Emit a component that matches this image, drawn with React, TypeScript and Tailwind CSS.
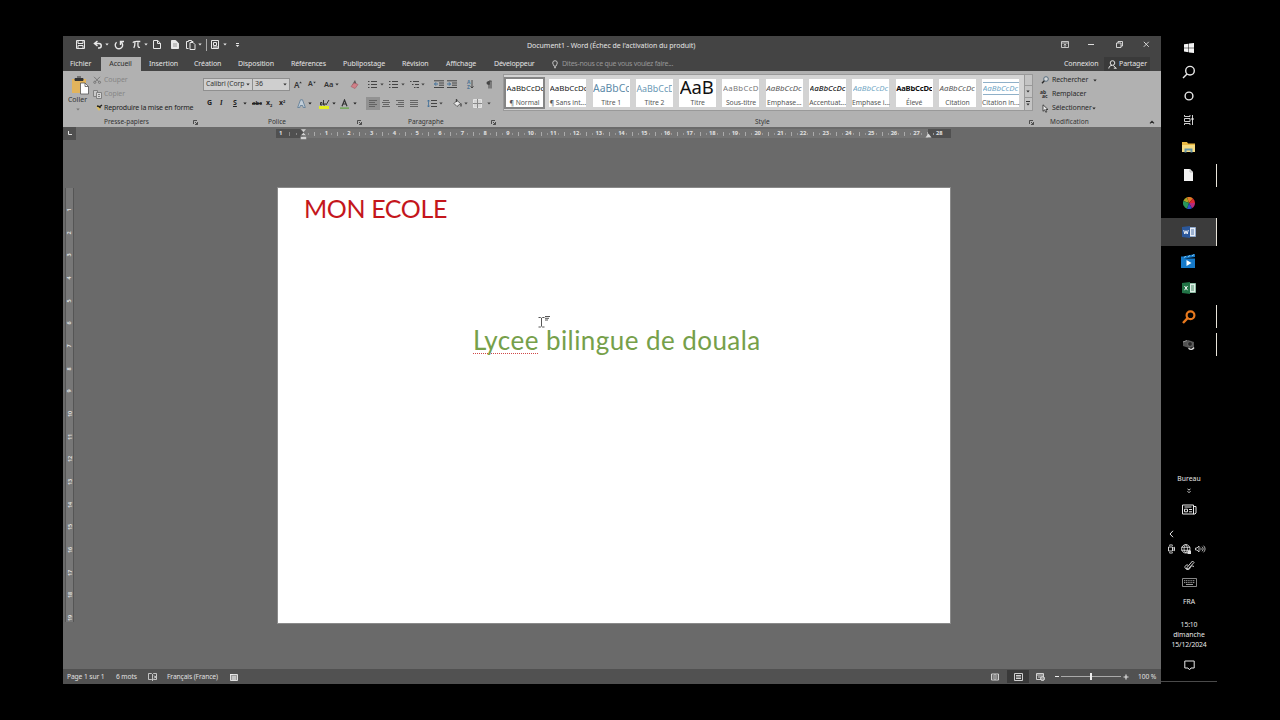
import type { ReactNode } from "react";
import clsx from "clsx";

type IconProps = { w?: number; h?: number; children: ReactNode; className?: string };

function Icon({ w = 10, h = 10, children, className }: IconProps) {
  return (
    <svg
      width={w}
      height={h}
      viewBox={`0 0 ${w} ${h}`}
      fill="none"
      stroke="currentColor"
      strokeWidth="1"
      className={clsx("shrink-0", className)}
    >
      {children}
    </svg>
  );
}

function Caret({ className }: { className?: string }) {
  return (
    <Icon w={4} h={3} className={className}>
      <path d="M0.3 0.5h3.4L2 2.5z" fill="currentColor" stroke="none" />
    </Icon>
  );
}

function Slot({ className, children }: { className: string; children?: ReactNode }) {
  return <div className={clsx("flex shrink-0 items-center whitespace-nowrap", className)}>{children}</div>;
}

function Launcher() {
  return (
    <Icon w={5} h={5} className="text-[#333]">
      <path d="M0.5 4V0.5H4M2 2l2.3 2.3M4.5 2v2.5H2" strokeWidth="0.8" />
    </Icon>
  );
}

function QuickAccess() {
  return (
    <div className="flex h-[17px] w-[200px] items-center text-[#e8e8e8]">
      <Slot className="w-[13px]" />
      <Slot className="w-[17px]">
        <Icon w={9} h={9}>
          <path d="M0.5 0.5h8v8h-8zM2 0.5v3h5v-3M2 8.5v-3h5v3" />
        </Icon>
      </Slot>
      <Slot className="w-[21px]">
        <Icon w={10} h={9}>
          <path d="M4.5 1L1.5 3.5l3 2.5M1.5 3.5h4.5a2.2 2.2 0 0 1 0 4.5H5" strokeWidth="1.5" />
        </Icon>
        <Caret className="ml-[2px]" />
      </Slot>
      <Slot className="w-[18px]">
        <Icon w={10} h={10}>
          <path d="M2.6 2.2A3.7 3.7 0 1 0 7 2M6.5 5V1.5H10" strokeWidth="1.4" />
        </Icon>
      </Slot>
      <Slot className="w-[21px]">
        <Icon w={9} h={9}>
          <path d="M0.8 2.6C1.6 1 2.6 1.5 8.3 1.5M3 1.7c0 3-.3 5-1.2 6.3M6 1.7c-.2 3.5-.4 6.2 2 5.7" strokeWidth="1.3" />
        </Icon>
        <Caret className="ml-[3px]" />
      </Slot>
      <Slot className="w-[18px]">
        <Icon w={8} h={9}>
          <path d="M0.5 0.5h4.2l2.8 2.8v5.2h-7zM4.5 0.5v3h3" />
        </Icon>
      </Slot>
      <Slot className="w-[15px]">
        <Icon w={8} h={9}>
          <path d="M0.5 0.5h4.2l2.8 2.8v5.2h-7z" fill="#e8e8e8" />
          <path d="M2 4h4M2 6h4" stroke="#777" strokeWidth="0.7" />
        </Icon>
      </Slot>
      <Slot className="w-[20px]">
        <Icon w={10} h={10}>
          <path d="M4 2.5h3l2 2v5H4zM2.5 8.5h-2v-7h2V.5h3v1H7v1" />
        </Icon>
        <Caret className="ml-[2px]" />
      </Slot>
      <Slot className="w-[5px]">
        <div className="h-[12px] w-px bg-[#aaa]" />
      </Slot>
      <Slot className="w-[24px]">
        <Icon w={9} h={9}>
          <path d="M0.5 0.5h7v8h-7zM2.5 2.5h3v3h-3zM2 7h5" />
        </Icon>
        <Caret className="ml-[3px]" />
      </Slot>
      <Slot className="w-[8px]">
        <Icon w={5} h={6}>
          <path d="M1 1.5h3" />
          <path d="M0.7 3h3.6L2.5 5z" fill="currentColor" stroke="none" />
        </Icon>
      </Slot>
    </div>
  );
}

function TitleBar() {
  return (
    <div className="flex h-[18px] text-[#e4e4e4]">
      <QuickAccess />
      <div className="flex h-[21px] w-[798px] items-center whitespace-nowrap pl-[264px] text-[7px] tracking-[-0.04px]">
        Document1 - Word (Échec de l'activation du produit)
      </div>
      <Slot className="h-[17px] w-[27px]">
        <Icon w={8} h={7}>
          <path d="M0.5 0.5h7v6h-7zM0.5 2h7M4 6V3.3M2.7 4.3L4 3.2l1.3 1.1" strokeWidth="0.8" />
        </Icon>
      </Slot>
      <Slot className="h-[17px] w-[28px]">
        <div className="h-px w-[6px] bg-[#ddd]" />
      </Slot>
      <Slot className="h-[17px] w-[27px]">
        <Icon w={7} h={7}>
          <path d="M0.5 2h4.5v4.5H0.5zM2 2V0.5h4.5V5H5" strokeWidth="0.9" />
        </Icon>
      </Slot>
      <Slot className="h-[17px]">
        <Icon w={7} h={7}>
          <path d="M0.8 0.8l5 5M5.8 0.8l-5 5" strokeWidth="0.9" />
        </Icon>
      </Slot>
    </div>
  );
}

function TabBar() {
  return (
    <div className="flex h-[17px] items-end text-[7px] tracking-[-0.08px] text-[#e4e4e4]">
      <Slot className="h-[14px] w-[38px] pl-[7px]">Fichier</Slot>
      <Slot className="h-[14px] w-[40px] justify-center bg-[#b1b1b1] pr-[1px] text-[#2c2c2c]">Accueil</Slot>
      <Slot className="h-[14px] w-[53px] pl-[8px]">Insertion</Slot>
      <Slot className="h-[14px] w-[44px]">Création</Slot>
      <Slot className="h-[14px] w-[53px]">Disposition</Slot>
      <Slot className="h-[14px] w-[52px] tracking-[-0.15px]">Références</Slot>
      <Slot className="h-[14px] w-[59px]">Publipostage</Slot>
      <Slot className="h-[14px] w-[44px]">Révision</Slot>
      <Slot className="h-[14px] w-[48px]">Affichage</Slot>
      <Slot className="h-[14px] w-[58px] tracking-[-0.15px]">Développeur</Slot>
      <Slot className="h-[14px] w-[10px]">
        <Icon w={6} h={9}>
          <path d="M2 6.2C2 5 .7 4.5.7 3a2.3 2.3 0 0 1 4.6 0C5.3 4.5 4 5 4 6.2zM2 7.7h2" strokeWidth="0.8" />
        </Icon>
      </Slot>
      <Slot className="h-[14px] w-[502px] tracking-[-0.27px] text-[#979797]">Dites-nous ce que vous voulez faire...</Slot>
      <Slot className="h-[14px] w-[40px]">Connexion</Slot>
      <Slot className="h-[14px] w-[46px] bg-[#3a3a3a] pl-[4px]">
        <Icon w={9} h={9} className="mr-[2px]">
          <circle cx="4.5" cy="3" r="2.3" />
          <path d="M0.8 8.5C1 6.3 2.4 5.4 4 5.4M5.2 5.3L8.3 8.5M5.8 8.2h2.5" />
        </Icon>
        Partager
      </Slot>
    </div>
  );
}

function GroupLabel({ children, className }: { children: ReactNode; className?: string }) {
  return <span className={clsx("whitespace-nowrap text-[6.5px] leading-[10px] text-[#333]", className)}>{children}</span>;
}

function ClipboardGroup() {
  return (
    <div className="flex w-[140px] shrink-0 flex-col">
      <div className="flex h-[45px]">
        <div className="flex w-[29px] flex-col items-center pt-[3px] text-[7px] leading-[9px] text-[#333]">
          <Icon w={18} h={20} className="ml-[4px]">
            <path d="M1 4h14v14H1z" fill="#e2b45c" stroke="none" />
            <path d="M4 3.5h8v2H4zM6 2h4" fill="#333" stroke="#333" />
            <path d="M9.5 8h4.5l3.5 3.5V19H9.5z" fill="#fff" stroke="#555" strokeWidth="0.8" />
            <path d="M14 8v3.5h3.5" stroke="#555" strokeWidth="0.8" />
          </Icon>
          <span>Coller</span>
          <Caret className="mt-[4px] text-[#777]" />
        </div>
        <div className="flex flex-col pt-[1px] text-[7px]">
          <Slot className="h-[14px] pl-[1px] tracking-[-0.1px] text-[#868686]">
            <Icon w={9} h={8} className="mr-[2px] text-[#777]">
              <path d="M1 .8l5 5M7 .8l-5 5" />
              <circle cx="1.8" cy="6.3" r="1.1" />
              <circle cx="6.5" cy="6.3" r="1.1" />
            </Icon>
            Couper
          </Slot>
          <Slot className="h-[14px] pl-[1px] tracking-[-0.1px] text-[#868686]">
            <Icon w={9} h={9} className="mr-[2px] text-[#808080]">
              <path d="M.5.5h4v6h-4z" fill="#c9c9c9" />
              <path d="M3.5 2.5h5v6h-5zM5 4.5h2M5 6.5h2" fill="#d6d6d6" />
            </Icon>
            Copier
          </Slot>
          <Slot className="h-[14px] pl-[4px] tracking-[-0.16px] text-[#222]">
            <Icon w={7} h={8} className="mr-[1px]">
              <path d="M0 2.5l3-1 2 2.5-2 3z" fill="#e0c060" stroke="none" />
              <path d="M1 2l2 .5L4.5 4M4 2.5l2-1.5" stroke="#222" strokeWidth="1.4" />
            </Icon>
            Reproduire la mise en forme
          </Slot>
        </div>
      </div>
      <div className="flex h-[10px] items-center">
        <GroupLabel className="w-[89px] pl-[41px]">Presse-papiers</GroupLabel>
        <Slot className="ml-[41px]">
          <Launcher />
        </Slot>
      </div>
    </div>
  );
}

function FontGroup() {
  return (
    <div className="flex w-[163px] shrink-0 flex-col">
      <div className="flex h-[45px] flex-col pt-[6px]">
        <div className="flex h-[13px] items-center text-[#333]">
          <Slot className="h-[13px] w-[50px] justify-between border border-[#8f8f8f] bg-[#cfcfcf] px-[2px] text-[6.8px] tracking-[-0.1px]">
            Calibri (Corp
            <Caret />
          </Slot>
          <Slot className="h-[13px] w-[37px] justify-between border border-l-0 border-[#8f8f8f] bg-[#cfcfcf] px-[2px] text-[7px]">
            36
            <Caret />
          </Slot>
          <Slot className="w-[14px] pl-[4px] text-[8px] font-semibold">
            A
            <Icon w={3} h={8}>
              <path d="M.2 2.3h2.6L1.5.5z" fill="#333" stroke="none" />
            </Icon>
          </Slot>
          <Slot className="w-[20px] pl-[4px] text-[7px] font-semibold">
            A
            <Icon w={3} h={8}>
              <path d="M.2.7h2.6L1.5 2.5z" fill="#333" stroke="none" />
            </Icon>
          </Slot>
          <Slot className="w-[26px] text-[7.5px] font-semibold">
            Aa
            <Caret className="ml-[2px]" />
          </Slot>
          <Slot className="w-[14px]">
            <Icon w={9} h={9}>
              <path d="M2 5l3-5 1.5 4z" fill="#555" stroke="none" />
              <path d="M1 6.5l3-3.5 4 1.5-3 4z" fill="#d08088" stroke="#a8606a" strokeWidth="0.7" />
            </Icon>
          </Slot>
        </div>
        <div className="mt-[6px] flex h-[13px] items-center text-[7px] font-bold text-[#222]">
          <Slot className="w-[17px] pl-[4px]">G</Slot>
          <Slot className="w-[13px] font-serif italic">I</Slot>
          <Slot className="w-[19px] gap-[6px]">
            <span className="underline">S</span>
            <Caret />
          </Slot>
          <Slot className="w-[14px] text-[6px] tracking-[-0.2px] line-through">abc</Slot>
          <Slot className="w-[13px]">
            x<span className="mt-[4px] text-[4px]">2</span>
          </Slot>
          <Slot className="w-[18px]">
            x<span className="mb-[4px] text-[4px]">2</span>
          </Slot>
          <Slot className="w-[22px]">
            <Icon w={9} h={9} className="mr-[2px]">
              <path d="M.7 8.5L3.5.8h2L8.3 8.5H6.2L5.7 6.5H3.3L2.8 8.5z" stroke="#5a7894" fill="#c3cfd9" strokeWidth="0.8" />
            </Icon>
            <Caret />
          </Slot>
          <Slot className="w-[21px]">
            <Icon w={11} h={10} className="mr-[2px]">
              <path d="M0 7h10v3H0z" fill="#e4ee20" stroke="none" />
              <path d="M1.5 3.5v2.5H3V3.5zM4.5 1v5H6V4M7 6l3-5" stroke="#333" />
            </Icon>
            <Caret />
          </Slot>
          <Slot className="w-[20px]">
            <Icon w={9} h={10} className="mr-[4px]">
              <path d="M0 8.3h9v1.7H0z" fill="#77a860" stroke="none" />
              <path d="M2 7.3L4.5 1 7 7.3M3 5h3" stroke="#333" strokeWidth="1.2" />
            </Icon>
            <Caret />
          </Slot>
        </div>
      </div>
      <div className="flex h-[10px] items-center">
        <GroupLabel className="w-[89px] pl-[65px]">Police</GroupLabel>
        <Slot className="ml-[65px]">
          <Launcher />
        </Slot>
      </div>
    </div>
  );
}

function Lines({ x = "M0 1.5h8M0 3.5h6M0 5.5h8M0 7.5h6" }: { x?: string }) {
  return (
    <Icon w={9} h={9} className="text-[#5c5c5c]">
      <path d={x} strokeWidth="0.9" />
    </Icon>
  );
}

function ParagraphGroup() {
  return (
    <div className="flex w-[136px] shrink-0 flex-col text-[#444]">
      <div className="flex h-[45px] flex-col pt-[6px]">
        <div className="flex h-[13px] items-center pl-[2px]">
          {[0, 1, 2].map((n) => (
            <Slot key={n} className={n === 2 ? "w-[24px] gap-[2px]" : "w-[21px] gap-[3px]"}>
              <Icon w={9} h={9}>
                {n === 2 ? (
                  <path d="M0 1.5h1.5M3 1.5h6M2 4.5h1.5M5 4.5h4M4 7.5h1.5M6.5 7.5H9" />
                ) : (
                  <path d="M0 1.5h1.5M3 1.5h6M0 4.5h1.5M3 4.5h6M0 7.5h1.5M3 7.5h6" />
                )}
              </Icon>
              <Caret />
            </Slot>
          ))}
          <Slot className="w-[13px]">
            <Icon w={10} h={9}>
              <path d="M0 .8h10M5 3h5M5 5.2h5M0 7.5h10" />
              <path d="M4 4H.5M2 2.3L.5 4 2 5.7" stroke="#3f6f99" />
            </Icon>
          </Slot>
          <Slot className="w-[20px]">
            <Icon w={10} h={9}>
              <path d="M0 .8h10M5 3h5M5 5.2h5M0 7.5h10" />
              <path d="M0 4h3.5M2 2.3L3.5 4 2 5.7" stroke="#3f6f99" />
            </Icon>
          </Slot>
          <Slot className="w-[19px]">
            <div className="flex flex-col text-[5px] font-bold leading-[5px] text-[#4f7596]">
              <span>A</span>
              <span>Z</span>
            </div>
            <Icon w={4} h={9} className="text-[#333]">
              <path d="M2 0v8M.5 6.3L2 8l1.5-1.7" strokeWidth="0.8" />
            </Icon>
          </Slot>
          <Slot>
            <Icon w={6} h={9}>
              <path d="M3 5V1h2.5M3 1v7.5M5 1v7.5" />
              <circle cx="2.2" cy="3" r="1.7" fill="#444" stroke="none" />
            </Icon>
          </Slot>
        </div>
        <div className="mt-[6px] flex h-[13px] items-center">
          <Slot className="h-[13px] w-[14px] justify-center bg-[#929292]">
            <Lines />
          </Slot>
          <Slot className="w-[14px] pl-[2px]">
            <Lines x="M1 1.5h6M0 3.5h8M1 5.5h6M0 7.5h8" />
          </Slot>
          <Slot className="w-[14px] pl-[2px]">
            <Lines x="M0 1.5h8M2 3.5h6M0 5.5h8M2 7.5h6" />
          </Slot>
          <Slot className="w-[19px] pl-[2px]">
            <Lines x="M0 1.5h8M0 3.5h8M0 5.5h8M0 7.5h8" />
          </Slot>
          <Slot className="w-[26px] gap-[2px]">
            <Icon w={10} h={9}>
              <path d="M4 1.5h6M4 4.5h6M4 7.5h6" />
              <path d="M1.5 1v7M.2 2.5L1.5 1l1.3 1.5M.2 6.5L1.5 8l1.3-1.5" stroke="#3f6f99" strokeWidth="0.8" />
            </Icon>
            <Caret />
          </Slot>
          <Slot className="w-[20px] gap-[1px]">
            <Icon w={10} h={9}>
              <path d="M1 4.5L4 1.5l3.5 3L4 7.5z" fill="#e8e8e8" strokeWidth="0.8" />
              <path d="M3.5 0v3M8 4.5v3" strokeWidth="1.3" />
            </Icon>
            <Caret />
          </Slot>
          <Slot className="gap-[5px]">
            <Icon w={9} h={9}>
              <path d="M.5.5h8v8h-8z" stroke="#e4e4e4" fill="#d5d5d5" />
              <path d="M4.5 0v9M0 4.5h9" stroke="#888" />
            </Icon>
            <Caret />
          </Slot>
        </div>
      </div>
      <div className="flex h-[10px] items-center">
        <GroupLabel className="w-[89px] pl-[42px]">Paragraphe</GroupLabel>
        <Slot className="ml-[36px]">
          <Launcher />
        </Slot>
      </div>
    </div>
  );
}

const styles = [
  { name: "¶ Normal", look: "text-[#222]" },
  { name: "¶ Sans int...", look: "text-[#222]" },
  { name: "Titre 1", sample: "AaBbCc", look: "text-[#5c8aa8] text-[10.4px]" },
  { name: "Titre 2", sample: "AaBbCcD", look: "text-[#6a99b5] text-[8.9px]" },
  { name: "Titre", sample: "AaB", look: "text-[#111] text-[18.5px] tracking-[-0.1px]" },
  { name: "Sous-titre", sample: "AaBbCcD", look: "text-[#777] text-[7.8px] tracking-[0.3px]" },
  { name: "Emphase...", look: "text-[#555] italic" },
  { name: "Accentuat...", look: "text-[#222] italic font-medium" },
  { name: "Emphase i...", look: "text-[#73a7c4] italic" },
  { name: "Élevé", look: "text-[#111] font-bold text-[7.6px] tracking-[-0.2px]" },
  { name: "Citation", look: "text-[#555] italic" },
  { name: "Citation in...", look: "text-[#6fa5c5] italic border-y border-[#8fb0c8]" },
];

function StyleGroup() {
  return (
    <div className="flex w-[538px] shrink-0 flex-col">
      <div className="flex h-[45px] items-start pl-[1px] pt-[2px]">
        <div className="flex h-[37px] items-center border border-[#999] bg-[#d3d3d3]">
          {styles.map((s, i) => (
            <div
              key={s.name}
              className={clsx(
                "mr-[2.3px] flex h-[32px] w-[41px] shrink-0 flex-col items-center overflow-hidden border bg-white",
                i === 0 ? "border-2 border-[#858585]" : "border-[#d3d3d3] p-[1px] bg-clip-content",
              )}
            >
              <div className="flex h-[18px] w-[37px] shrink-0 items-center justify-center overflow-hidden pt-[2px]">
                <span
                  className={clsx(
                    "w-[36px] overflow-hidden whitespace-nowrap",
                    s.name === "Titre" ? "mb-[4px] leading-[17px]" : "leading-[11px]",
                    /text-\[\d/.test(s.look) || "text-[7.9px]",
                    s.look,
                  )}
                >
                  {s.sample ?? "AaBbCcDc"}
                </span>
              </div>
              <div className="whitespace-nowrap pt-[1px] text-[6.8px] leading-[9px] tracking-[-0.05px] text-[#555]">
                {s.name}
              </div>
            </div>
          ))}
          <div className="flex h-[35px] w-[8px] flex-col border-l border-[#999] bg-[#c4c4c4] text-[#333]">
            <div className="h-[11px] border-b border-[#999]" />
            <div className="flex h-[12px] items-center justify-center border-b border-[#999]">
              <Caret />
            </div>
            <div className="flex h-[11px] flex-col items-center justify-center gap-px">
              <div className="h-px w-[4px] bg-[#333]" />
              <Caret />
            </div>
          </div>
        </div>
      </div>
      <div className="flex h-[10px] items-center">
        <GroupLabel className="w-[320px] pl-[253px]">Style</GroupLabel>
        <Slot className="ml-[207px]">
          <Launcher />
        </Slot>
      </div>
    </div>
  );
}

function EditGroup() {
  return (
    <div className="flex flex-1 flex-col text-[7px] tracking-[-0.1px] text-[#2a2a2a]">
      <div className="flex h-[45px] flex-col pt-[1px]">
        <Slot className="h-[14px] pl-[1px]">
          <Icon w={9} h={8} className="mr-[2px]">
            <circle cx="5" cy="3" r="2.3" stroke="#556d80" fill="#d8d8d8" />
            <path d="M3.3 4.8L1 7.2" strokeWidth="1.4" />
          </Icon>
          <span className="w-[41px]">Rechercher</span>
          <Caret />
        </Slot>
        <Slot className="h-[14px]">
          <div className="mr-[3px] flex w-[9px] flex-col text-[5px] font-bold leading-[4px]">
            <span>ab</span>
            <span className="pl-[2px]">ac</span>
          </div>
          Remplacer
        </Slot>
        <Slot className="h-[14px] pl-[2px]">
          <Icon w={8} h={9} className="mr-[2px]">
            <path d="M1 .8v6.5l1.6-1.5L3.8 8.3l1-.5-1-2.3H6z" fill="#f0f0f0" strokeWidth="0.8" />
          </Icon>
          Sélectionner
          <Caret />
        </Slot>
      </div>
      <div className="flex h-[10px] items-center">
        <GroupLabel className="w-[109px] pl-[10px] tracking-[0.05px]">Modification</GroupLabel>
        <Icon w={6} h={4}>
          <path d="M1 3.3l2-2 2 2" strokeWidth="1.2" />
        </Icon>
      </div>
    </div>
  );
}

function HorizontalRuler() {
  const numbers = Array.from({ length: 28 }, (_, i) => i + 1);
  return (
    <div className="flex h-[13px] shrink-0">
      <div className="flex size-[13px] items-center justify-center bg-[#505050]">
        <Icon w={5} h={5} className="text-[#e0e0e0]">
          <path d="M1.5 0v3.5H5" />
        </Icon>
      </div>
      <div className="ml-[200px] mt-[2px] flex h-[9px] w-[675px] text-[5.8px] font-bold leading-[9px] text-[#e0e0e0]">
        <div className="flex w-[27px] shrink-0 items-center justify-between bg-[#505050] pl-[3px] pr-[6px]">
          <span>1</span>
          <span className="h-[4px] w-px bg-[#888]" />
          <span className="h-[2px] w-px bg-[#888]" />
        </div>
        <div className="relative flex w-[648px] bg-[linear-gradient(90deg,#747474_625px,#505050_625px)]">
          {numbers.map((n) => (
            <div key={n} className="flex w-[22.71px] shrink-0 items-center">
              <span className="ml-[5px] h-[2px] w-px bg-[#999]" />
              <span className="ml-[5px] h-[4px] w-px bg-[#aaa]" />
              <span className="ml-[5px] h-[2px] w-px bg-[#999]" />
              <span className="-mr-[5px] ml-auto w-[9px] text-center tracking-[-0.2px]">{n}</span>
            </div>
          ))}
          <Icon w={7} h={11} className="absolute -left-[3px] top-0 text-[#d0d0d0]">
            <path
              d="M.5 0h6L3.5 3.5zM3.5 3.5L6.5 6.5h-6zM.5 7.5h6v3h-6z"
              fill="currentColor"
              stroke="#555"
              strokeWidth="0.4"
            />
          </Icon>
          <Icon w={7} h={5} className="absolute left-[622px] top-[4px] text-[#d8d8d8]">
            <path d="M3.5 .5L6.5 4.5h-6z" fill="currentColor" stroke="none" />
          </Icon>
        </div>
      </div>
    </div>
  );
}

function VerticalRuler() {
  const numbers = Array.from({ length: 19 }, (_, i) => i + 1);
  return (
    <div className="mb-[47px] ml-[2px] mt-[48px] w-[9px] shrink-0 border-x border-[#555] bg-[#777] pt-[3px] text-[5.5px] font-bold text-[#dedede]">
      {numbers.map((n) => (
        <div key={n} className="flex h-[22.67px] flex-col items-center">
          <span className="mt-[2px] h-px w-[2px] bg-[#888]" />
          <span className="mt-[5px] h-px w-[4px] bg-[#a0a0a0]" />
          <span className="mt-[5px] h-px w-[2px] bg-[#888]" />
          <span className="mt-[3px] -rotate-90 leading-[8px] tracking-[-0.2px]">{n}</span>
        </div>
      ))}
    </div>
  );
}

function Page() {
  return (
    <div className="ml-[203px] mt-[47px] h-[437px] w-[674px] shrink-0 border border-[#8a8a8a] bg-white font-[Lato,sans-serif]">
      <div className="pl-[26px] pt-[3px] text-[25px] leading-[34px] tracking-[-0.38px] text-[#c4161c]">MON ECOLE</div>
      <div className="relative mt-[99px] whitespace-nowrap pl-[195px] text-[26px] leading-[33px] tracking-[0.44px] text-[#76a04a]">
        <span className="underline decoration-[#d04848] decoration-dotted decoration-[1px] underline-offset-[3px] [text-decoration-skip-ink:none]">
          Lycee
        </span>{" "}
        bilingue de douala
        <Icon w={12} h={13} className="absolute left-[260px] top-[-8px] text-[#444]">
          <path d="M.5 1.5h2l1 .8 1-.8h2M3.5 2v8M.5 11h2l1-.8 1 .8h2" strokeWidth="0.9" />
          <path d="M7 .5h5M7 2.3h4M7 4h3" strokeWidth="0.9" />
        </Icon>
      </div>
    </div>
  );
}

function StatusBar() {
  return (
    <div className="flex h-[15px] items-center bg-[#515151] text-[6.7px] tracking-[-0.1px] text-[#e0e0e0]">
      <Slot className="w-[53px] pl-[4px] pt-[1px]">Page 1 sur 1</Slot>
      <Slot className="w-[32px] pt-[1px]">6 mots</Slot>
      <Slot className="w-[19px]">
        <Icon w={10} h={8}>
          <path d="M4.5 1.5v6M.5.5h3l1 1 1-1h3v6h-3l-1 1-1-1h-3zM6 2.5l2.5 3M8.5 2.5L6 5.5" strokeWidth="0.8" />
        </Icon>
      </Slot>
      <Slot className="w-[63px] pt-[1px]">Français (France)</Slot>
      <Slot className="w-[757px]">
        <Icon w={8} h={8}>
          <path d="M.5 1.5h7v6h-7z" fill="#999" />
          <path d="M0 1.5h3M2 4h4M2 6h4" stroke="#eee" />
        </Icon>
      </Slot>
      <Slot className="w-[20px] pl-[4px]">
        <Icon w={8} h={8}>
          <path d="M.5 1h7v6h-7zM4 1v6M1.5 3H3M1.5 5H3M5 3h1.5M5 5h1.5" strokeWidth="0.9" />
        </Icon>
      </Slot>
      <Slot className="h-[13px] w-[22px] justify-center bg-[#393939]">
        <Icon w={9} h={8}>
          <path d="M.5.5h8v7h-8zM2 2.5h5M2 4h5M2 5.5h5" strokeWidth="0.9" />
        </Icon>
      </Slot>
      <Slot className="w-[25px] pl-[7px]">
        <Icon w={9} h={8}>
          <path d="M.5.5h7v6h-7zM.5 2h7M2 4h3" strokeWidth="0.9" />
          <circle cx="6.5" cy="5.5" r="2" fill="#999" />
        </Icon>
      </Slot>
      <Slot className="w-[7px] pl-[1px]">
        <div className="h-px w-[4px] bg-[#eee]" />
      </Slot>
      <Slot className="w-[62px]">
        <div className="h-px w-[29px] bg-[#aaa]" />
        <div className="h-[7px] w-[2px] bg-[#eee]" />
        <div className="h-px w-[29px] bg-[#aaa]" />
      </Slot>
      <Slot className="w-[15px]">
        <Icon w={6} h={6}>
          <path d="M3 .5v5M.5 3h5" strokeWidth="1.2" />
        </Icon>
      </Slot>
      <Slot className="pt-[1px]">100 %</Slot>
    </div>
  );
}

type TaskItem = { h: string; icon: ReactNode; open?: boolean; active?: boolean };

const taskItems: TaskItem[] = [
  {
    h: "h-[23px]",
    icon: (
      <Icon w={10} h={10}>
        <path d="M0 1.3L4.5.7v4H0zM5 .6L10 0v4.7H5zM0 5.2h4.5v4L0 8.6zM5 5.2h5V10l-5-.6z" fill="#f4f4f4" stroke="none" />
      </Icon>
    ),
  },
  {
    h: "h-[25px]",
    icon: (
      <Icon w={14} h={14}>
        <circle cx="8" cy="5.7" r="4.3" strokeWidth="1.4" />
        <path d="M5 8.9L1 13" strokeWidth="1.4" />
      </Icon>
    ),
  },
  {
    h: "h-[24px]",
    icon: (
      <Icon w={10} h={10}>
        <circle cx="5" cy="5" r="3.9" strokeWidth="1.4" />
      </Icon>
    ),
  },
  {
    h: "h-[23px]",
    icon: (
      <Icon w={10} h={10}>
        <path d="M.5 0v1.5H6V0M.5 3.5H6v3H.5zM.5 10V8.5H6V10M8.5 0v10" strokeWidth="0.9" />
        <path d="M7.5 3h2v2h-2z" fill="currentColor" stroke="none" />
      </Icon>
    ),
  },
  {
    h: "h-[32px]",
    icon: (
      <Icon w={13} h={11}>
        <path d="M0 0h5l1 1.5h7V10H0z" fill="#e9b843" stroke="none" />
        <path d="M0 3h13v7H0z" fill="#f6dc83" stroke="none" />
        <path d="M2.5 10.5V6.5h8v4H8.5V8.5h-4v2z" fill="#6796a9" stroke="none" />
      </Icon>
    ),
  },
  {
    h: "h-[24px]",
    open: true,
    icon: (
      <Icon w={9} h={12}>
        <path d="M0 0h6l3 3v9H0z" fill="#f2f2f2" stroke="none" />
        <path d="M6 0v3h3" stroke="#aaa" strokeWidth="0.7" />
      </Icon>
    ),
  },
  {
    h: "h-[31px]",
    icon: (
      <Icon w={12} h={12}>
        <g stroke="none">
          <path d="M6 6L.3 4A6 6 0 0 1 4 .3z" fill="#a8a626" />
          <path d="M6 6L4 .3A6 6 0 0 1 10 1.5z" fill="#e07a26" />
          <path d="M6 6l4-4.5A6 6 0 0 1 12 6z" fill="#dc2a35" />
          <path d="M6 6h6A6 6 0 0 1 9 11.2z" fill="#b62a7c" />
          <path d="M6 6l3 5.2A6 6 0 0 1 4 11.7z" fill="#2d50c8" />
          <path d="M6 6l-2 5.7A6 6 0 0 1 .3 4z" fill="#28965a" />
        </g>
      </Icon>
    ),
  },
  {
    h: "h-[28px]",
    open: true,
    active: true,
    icon: (
      <Icon w={14} h={12}>
        <path d="M7 1.5h6.5v9H7z" fill="#e8eef6" stroke="#8fa9cf" />
        <path d="M9 4h3M9 6h3M9 8h3" stroke="#2b579a" strokeWidth="0.8" />
        <path d="M0 1l8-1v12l-8-1z" fill="#2b579a" stroke="none" />
        <path d="M1.7 4l1.1 4L4 4.7 5.2 8l1.1-4" stroke="#fff" strokeWidth="0.9" />
      </Icon>
    ),
  },
  {
    h: "h-[29px]",
    icon: (
      <Icon w={15} h={14}>
        <path d="M0 2.5h2L14 0v3L3 4.5H14V14H0z" fill="#1679c8" stroke="none" />
        <path d="M3 3.5l2-1.2M7 2.7l2-1.2M11 1.8l2-1.2" stroke="#7fc4f0" />
        <path d="M5.5 6v6l5-3z" fill="#fff" stroke="none" />
      </Icon>
    ),
  },
  {
    h: "h-[26px]",
    icon: (
      <Icon w={14} h={12}>
        <path d="M7 1.5h6.5v9H7z" fill="#dfeee6" stroke="#8bbba2" />
        <path d="M9 4h3M9 6h3M9 8h3" stroke="#217346" strokeWidth="0.8" />
        <path d="M0 1l8-1v12l-8-1z" fill="#217346" stroke="none" />
        <path d="M2.5 4l3 4.2M5.5 4l-3 4.2" stroke="#fff" />
      </Icon>
    ),
  },
  {
    h: "h-[31px]",
    open: true,
    icon: (
      <Icon w={14} h={14} className="text-[#e8791e]">
        <circle cx="8.5" cy="5.3" r="3.9" strokeWidth="2.2" />
        <path d="M5.6 8.2L1 13" strokeWidth="2.4" />
      </Icon>
    ),
  },
  {
    h: "h-[25px]",
    open: true,
    icon: (
      <Icon w={12} h={12}>
        <path d="M0 2.5l5-1.5 6 2v5l-5 1-6-2z" fill="#525252" stroke="none" />
        <circle cx="7" cy="5" r="2.4" fill="#262626" stroke="#777" strokeWidth="0.7" />
        <path d="M0 3l4-1.5" stroke="#999" />
        <path d="M5.5 9.2c2 1.8 4 1.5 5.5-.7" stroke="#ddd" strokeWidth="1.4" />
      </Icon>
    ),
  },
];

function Taskbar() {
  return (
    <div className="flex h-[646px] w-[56px] flex-col border-b border-[#4a4a4a] text-[6.8px] text-[#e8e8e8]">
      {taskItems.map((t, i) => (
        <div
          key={i}
          className={clsx("flex shrink-0 items-center justify-between", t.h, t.active && "bg-[#3b3b3b]")}
        >
          <span className="w-0" />
          {t.icon}
          <span className={clsx("w-px", t.active ? "h-full" : "h-[23px]", t.open && "bg-[#e8e4da]")} />
        </div>
      ))}
      <div className="mt-[115px] flex h-[14px] items-center justify-center tracking-[0.05px]">Bureau</div>
      <div className="flex h-[9px] items-center justify-center">
        <Icon w={4} h={6}>
          <path d="M.5.7L2 2.2 3.5.7M.5 3.2L2 4.7l1.5-1.5" strokeWidth="0.9" />
        </Icon>
      </div>
      <div className="flex h-[29px] items-center justify-center">
        <Icon w={15} h={11}>
          <path d="M.5 1h11v9H.5zM11.5 2.5H14V9l-1 1h-2M2.5 3h7M2.5 5.2h3v2.6h-3zM7 5.5h3M7 7.8h3" strokeWidth="1" />
        </Icon>
      </div>
      <div className="flex h-[20px] items-center pl-[8px]">
        <Icon w={5} h={8}>
          <path d="M4 .8L1 4l3 3.2" />
        </Icon>
      </div>
      <div className="flex h-[9px] items-center gap-[5px] pl-[6px]">
        <Icon w={9} h={10}>
          <path d="M1.5 3h4v4h-4zM5.5 4.5l2-1.2v3.4l-2-1.2M2 1.5c1-.8 3-.8 4 0M2 8.5c1 .8 3 .8 4 0" strokeWidth="0.9" />
        </Icon>
        <Icon w={10} h={10}>
          <circle cx="4.8" cy="4.8" r="4.2" strokeWidth="0.9" />
          <path d="M.5 3.3h8.6M.5 6.3h8.6M4.8.5C2.5 3 2.5 6.5 4.8 9 7 6.5 7 3 4.8.5" strokeWidth="0.8" />
          <path d="M6.500 6.500H10V10H6.500z" fill="#ddd" stroke="none" />
        </Icon>
        <Icon w={11} h={8} className="-ml-px">
          <path d="M.5 3H2l2-2v6L2 5H.5zM5.5 2.7c.8.8.8 1.8 0 2.6M7 1.7c1.5 1.5 1.5 3 0 4.6M8.500.7c2 2 2 4.500 0 6.600" strokeWidth="0.8" />
        </Icon>
      </div>
      <div className="flex h-[24px] items-center justify-center">
        <Icon w={11} h={11}>
          <path d="M3 7.5L8.5 1l1.5 1.5-5.5 6L2.500 9zM4 5C1.5 4.5 0 7 1.5 8.5S5.5 10 6 8s2-2.5 4-1.5" strokeWidth="0.9" />
        </Icon>
      </div>
      <div className="flex h-[11px] items-center justify-center text-[#aaa]">
        <Icon w={15} h={9}>
          <path d="M.5.5h14v8H.5z" strokeWidth="0.8" />
          <path d="M2 2.7h11M2 4.6h11" strokeDasharray="1.2 0.6" strokeWidth="0.9" />
          <path d="M4 6.5h7" strokeWidth="0.9" />
        </Icon>
      </div>
      <div className="flex h-[28px] items-center justify-center">FRA</div>
      <div className="mt-[4px] text-center leading-[10px] tracking-[-0.12px]">
        <div>15:10</div>
        <div className="tracking-[0px]">dimanche</div>
        <div>15/12/2024</div>
      </div>
      <div className="flex h-[31px] items-center justify-center">
        <Icon w={11} h={11}>
          <path d="M.8 1h9.4v7H7L5.5 9.8 4 8H.8z" />
        </Icon>
      </div>
    </div>
  );
}

export default function App() {
  return (
    <div className="flex h-[720px] w-[1280px] overflow-hidden bg-black pl-[63px] pt-[36px] font-['Noto_Sans','Open_Sans',sans-serif]">
      <div className="flex h-[648px] w-[1098px] shrink-0 flex-col bg-[#6a6a6a]">
        <div className="bg-[#444444]">
          <TitleBar />
          <TabBar />
        </div>
        <div className="flex h-[56px] shrink-0 bg-[#b1b1b1] pt-[1px]">
          <ClipboardGroup />
          <FontGroup />
          <ParagraphGroup />
          <StyleGroup />
          <EditGroup />
        </div>
        <HorizontalRuler />
        <div className="flex min-h-0 flex-1 overflow-hidden">
          <VerticalRuler />
          <Page />
        </div>
        <StatusBar />
      </div>
      <Taskbar />
    </div>
  );
}
